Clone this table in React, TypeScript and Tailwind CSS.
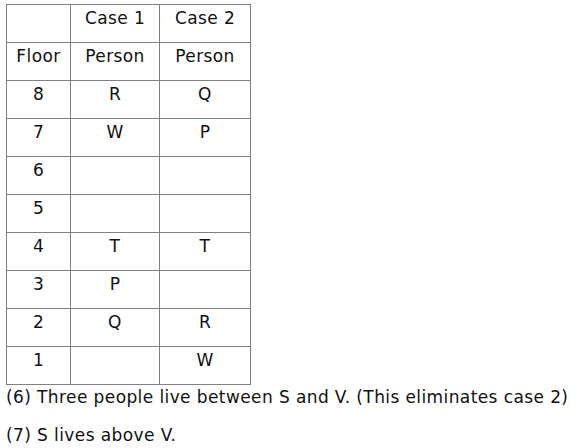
const rows: [string, string, string][] = [
  ['8', 'R', 'Q'],
  ['7', 'W', 'P'],
  ['6', '', ''],
  ['5', '', ''],
  ['4', 'T', 'T'],
  ['3', 'P', ''],
  ['2', 'Q', 'R'],
  ['1', '', 'W'],
];

function Cell({ children }: { children?: React.ReactNode }) {
  return (
    <div className="bg-white pt-[1px] text-center leading-6">{children}</div>
  );
}

export default function App() {
  const header: [string, string, string][] = [
    ['', 'Case 1', 'Case 2'],
    ['Floor', 'Person', 'Person'],
  ];

  return (
    <div
      className="min-h-[448px] w-[575px] bg-white text-[17px] tracking-[0.4px] text-[#111]"
      style={{ fontFamily: '"DejaVu Sans", sans-serif' }}
    >
      <div className="ml-[6px] pt-[4px]">
        <div className="grid w-fit auto-rows-[37px] grid-cols-[63px_88px_90px] gap-px bg-[#808080] p-px">
          {[...header, ...rows].map((r, i) =>
            r.map((c, j) => <Cell key={`${i}-${j}`}>{c}</Cell>)
          )}
        </div>
        <div className="flex flex-col gap-[14px]">
          <p className="whitespace-nowrap leading-6">
            (6) Three people live between S and V. (This eliminates case 2)
          </p>
          <p className="leading-6">(7) S lives above V.</p>
        </div>
      </div>
    </div>
  );
}
